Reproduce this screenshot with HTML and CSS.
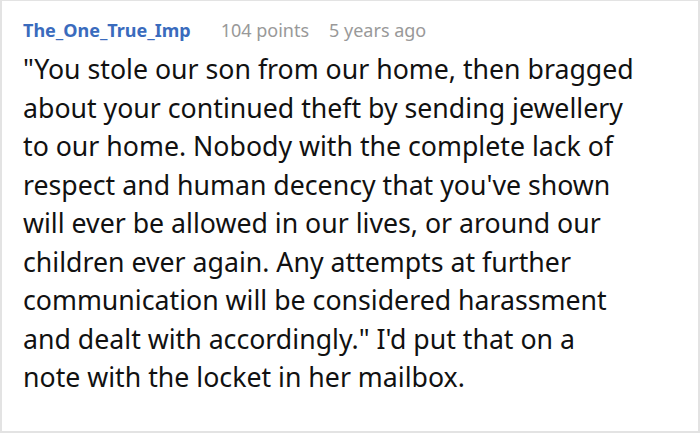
FILE: index.html
```html
<!DOCTYPE html>
<html lang="en">
<head>
<meta charset="utf-8">
<link rel="stylesheet" href="styles.css">
</head>
<body>
<div class="card">
  <div class="meta">
    <span class="author">The_One_True_Imp</span>
    <span class="info">104 points</span>
    <span class="info">5 years ago</span>
  </div>
  <p class="text">"You stole our son from our home, then bragged<br>about your continued theft by sending jewellery<br>to our home. Nobody with the complete lack of<br>respect and human decency that you've shown<br>will ever be allowed in our lives, or around our<br>children ever again. Any attempts at further<br>communication will be considered harassment<br>and dealt with accordingly." I'd put that on a<br>note with the locket in her mailbox.</p>
</div>
</body>
</html>
```
FILE: styles.css
```css
html, body {
  margin: 0;
  padding: 0;
  background: #fff;
}
.card {
  box-sizing: border-box;
  width: 700px;
  height: 433px;
  border: 2px solid #e3e3e3;
  border-top-width: 1px;
  padding: 17px 10px 0 21px;
  font-family: "Noto Sans", "Open Sans", sans-serif;
}
.meta {
  display: flex;
  align-items: baseline;
  gap: 20px;
  line-height: 24px;
  font-size: 18px;
}
.author {
  font-weight: 700;
  color: #3a6bbd;
  margin-right: 10px;
}
.info {
  color: #999;
}
.text {
  margin: 8px 0 0;
  font-size: 26.7px;
  line-height: 38.5px;
  color: #111;
  white-space: nowrap;
}
```
